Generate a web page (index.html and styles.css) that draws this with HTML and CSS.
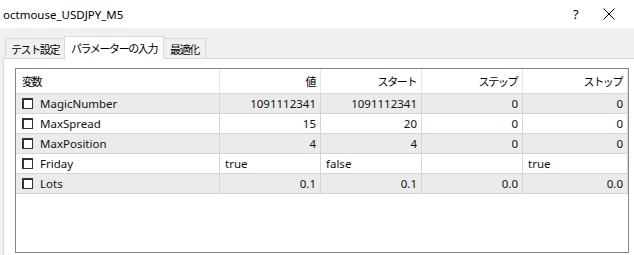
FILE: index.html
```html
<!DOCTYPE html>
<html lang="ja">
<head>
    <meta charset="UTF-8">
    <title>octmouse_USDJPY_M5</title>
    <link rel="stylesheet" href="styles.css">
</head>
<body>
    <div class="titlebar">
        <span class="title">octmouse_USDJPY_M5</span>
        <span class="help">?</span>
        <span class="close">
            <svg width="12" height="12" viewBox="0 0 12 12"><path d="M0.5 0.5 L11.5 11.5 M11.5 0.5 L0.5 11.5" stroke="#000" stroke-width="1" fill="none"/></svg>
        </span>
    </div>

    <div class="dialog">
        <div class="tabs">
            <div class="tab">テスト設定</div>
            <div class="tab active">パラメーターの入力</div>
            <div class="tab">最適化</div>
        </div>

        <div class="panel">
            <div class="grid">
                <div class="cell head">変数</div>
                <div class="cell head num">値</div>
                <div class="cell head num">スタート</div>
                <div class="cell head num">ステップ</div>
                <div class="cell head num">ストップ</div>

                <!-- パラメーター行 -->
                <div class="cell name odd"><span class="check"></span>MagicNumber</div>
                <div class="cell num odd">1091112341</div>
                <div class="cell num odd">1091112341</div>
                <div class="cell num odd">0</div>
                <div class="cell num odd">0</div>

                <div class="cell name"><span class="check"></span>MaxSpread</div>
                <div class="cell num">15</div>
                <div class="cell num">20</div>
                <div class="cell num">0</div>
                <div class="cell num">0</div>

                <div class="cell name odd"><span class="check"></span>MaxPosition</div>
                <div class="cell num odd">4</div>
                <div class="cell num odd">4</div>
                <div class="cell num odd">0</div>
                <div class="cell num odd">0</div>

                <div class="cell name"><span class="check"></span>Friday</div>
                <div class="cell">true</div>
                <div class="cell">false</div>
                <div class="cell"></div>
                <div class="cell">true</div>

                <div class="cell name odd"><span class="check"></span>Lots</div>
                <div class="cell num odd">0.1</div>
                <div class="cell num odd">0.1</div>
                <div class="cell num odd">0.0</div>
                <div class="cell num odd">0.0</div>
            </div>
        </div>
    </div>
</body>
</html>
```

FILE: styles.css
```css
body {
    margin: 0;
    width: 634px;
    height: 255px;
    overflow: hidden;
    background: #fff;
    font-family: "Noto Sans", "Noto Sans CJK JP", sans-serif;
    font-size: 11.5px;
    color: #111;
}

.titlebar {
    height: 28px;
    display: flex;
    align-items: center;
    background: #fff;
}

.title {
    margin-left: 3px;
    font-size: 11.5px;
    color: #000;
    flex: 1;
}

.help {
    width: 10px;
    font-size: 13px;
    color: #000;
    margin-right: 20px;
}

.close {
    display: flex;
    width: 12px;
    margin-right: 19px;
}

.dialog {
    background: #f0f0f0;
    height: 227px;
    display: flex;
    flex-direction: column;
}

.tabs {
    height: 30px;
    display: flex;
    align-items: flex-end;
    padding-left: 5px;
    box-sizing: border-box;
}

.tab {
    height: 20px;
    box-sizing: border-box;
    border: 1px solid #d9d9d9;
    border-bottom: none;
    border-right: none;
    padding: 0 5px;
    display: flex;
    align-items: center;
    font-family: "Noto Sans CJK JP", sans-serif;
    font-size: 11px;
    letter-spacing: -1.4px;
    color: #000;
    background: #f0f0f0;
}

.tab:last-child {
    border-right: 1px solid #d9d9d9;
    padding: 0 6px;
}

.tab.active {
    height: 23px;
    margin-bottom: -1px;
    background: #fff;
    border-right: 1px solid #d9d9d9;
    padding: 0 6px;
    position: relative;
    z-index: 1;
}

.tab.active + .tab {
    border-left: none;
}

.panel {
    flex: 1;
    margin-left: 3px;
    background: #fff;
    border-left: 1px solid #d9d9d9;
    border-top: 1px solid #d9d9d9;
    padding: 9px 0 0 11px;
}

.grid {
    width: 614px;
    height: 185px;
    box-sizing: border-box;
    border: 1px solid #828790;
    display: grid;
    grid-template-columns: 204px 101px 101px 101px 105px;
    grid-template-rows: 25px;
    grid-auto-rows: 20px;
    align-content: start;
}

.cell {
    box-sizing: border-box;
    border-right: 1px solid #d5d5d5;
    border-bottom: 1px solid #d5d5d5;
    display: flex;
    align-items: center;
    padding: 0 5px;
    white-space: nowrap;
}

.cell.num {
    justify-content: flex-end;
    padding-right: 4px;
}

.cell.odd {
    background: #ebebeb;
}

.cell.head {
    background: #fff;
    border-right-color: #e5e5e5;
    border-bottom-color: #d9d9d9;
    font-family: "Noto Sans CJK JP", sans-serif;
    font-size: 11px;
    letter-spacing: -1.4px;
    color: #000;
    padding-left: 6px;
}

.cell.head.num {
    padding-right: 5px;
}

.cell.name {
    padding-left: 6px;
}

.check {
    width: 11px;
    height: 11px;
    box-sizing: border-box;
    border: 1px solid #333;
    border-top-width: 2px;
    border-left-width: 2px;
    background: #fff;
    margin-right: 7px;
}
```
